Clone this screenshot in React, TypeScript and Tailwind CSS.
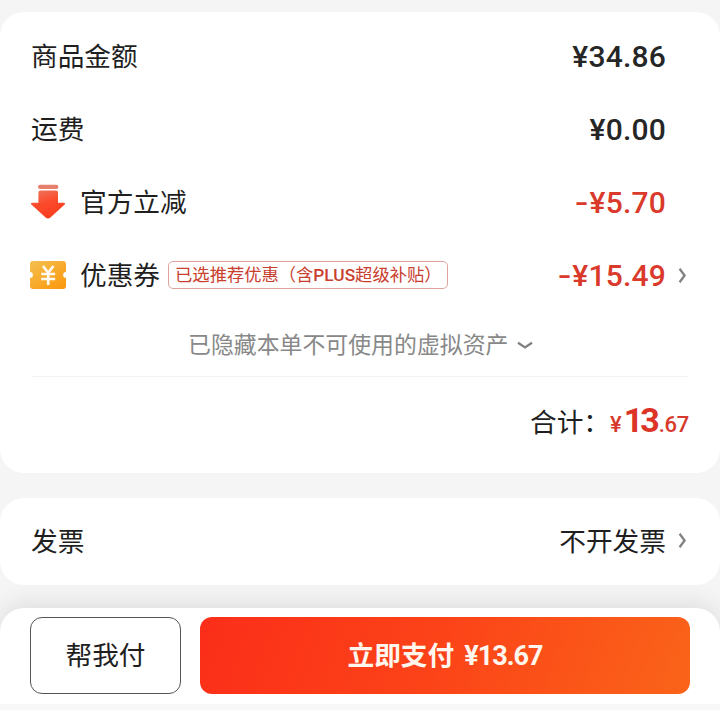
import type { ReactNode } from 'react';

const CJK = "font-['Noto_Sans_CJK_SC',sans-serif]";
const NUM = "font-['Roboto','Noto_Sans_CJK_SC',sans-serif]";

function DownArrowIcon() {
  return (
    <svg width="36" height="36" viewBox="0 0 36 36" className="-ml-px mt-px shrink-0">
      <defs>
        <linearGradient id="arrow" x1="0.2" y1="0" x2="0.6" y2="1">
          <stop offset="0" stopColor="#f0735c" />
          <stop offset="0.45" stopColor="#fb4a2c" />
          <stop offset="1" stopColor="#fb3c1c" />
        </linearGradient>
      </defs>
      <rect x="8" y="0.8" width="20.4" height="4.2" rx="2.1" fill="#e5806c" />
      <path
        d="M10.4 6.6H26Q28 6.6 28 8.6V18.8H33.6Q36 19 34.4 20.7L20.4 33.6Q18 35.6 15.6 33.6L1.6 20.7Q0 19 2.4 18.8H8.4V8.6Q8.4 6.6 10.4 6.6Z"
        fill="url(#arrow)"
      />
    </svg>
  );
}

function CouponIcon() {
  return (
    <svg width="36" height="28" viewBox="0 0 36 28" className="-ml-px shrink-0">
      <defs>
        <linearGradient id="coupon" x1="0" y1="0" x2="0.8" y2="1">
          <stop offset="0" stopColor="#f3c050" />
          <stop offset="1" stopColor="#fb9a10" />
        </linearGradient>
      </defs>
      <path
        d="M3 0H33Q36 0 36 3V11A2.9 2.9 0 0 0 36 16.8V25Q36 28 33 28H3Q0 28 0 25V16.8A2.9 2.9 0 0 0 0 11V3Q0 0 3 0Z"
        fill="url(#coupon)"
      />
      <path
        d="M13 5L18.2 11.8L23.4 5M11.2 13H25.2M11.2 18H25.2M18.2 11.5V24"
        fill="none"
        stroke="#fffaf0"
        strokeWidth="2.7"
      />
    </svg>
  );
}

function ChevronRight() {
  return (
    <svg width="10" height="17" viewBox="0 0 10 17" className="mt-px shrink-0">
      <path d="M1.6 1.8L6.6 8.5L1.6 15.2" fill="none" stroke="#808080" strokeWidth="2.3" />
    </svg>
  );
}

function Row({ label, children }: { label: ReactNode; children: ReactNode }) {
  return (
    <div className="flex h-[73px] items-center justify-between pl-[31px]">
      <div className="flex items-center">{label}</div>
      <div className="flex items-center">{children}</div>
    </div>
  );
}

function Amount({ value, negative = false }: { value: string; negative?: boolean }) {
  return (
    <span
      className={`${NUM} block pt-0.5 text-[30px] font-medium leading-none tracking-[0.2px] ${negative ? 'text-[#da3a2b]' : 'text-[#262626]'}`}
    >
      {negative && <span className="mr-px inline-block origin-right scale-x-[1.3]">-</span>}
      {value}
    </span>
  );
}

export default function App() {
  return (
    <div className={`${CJK} flex h-[710px] w-[720px] flex-col overflow-hidden bg-[#f5f5f5] pt-3 text-[26.7px] leading-none text-[#1f1f1f]`}>
      <section className="h-[461px] rounded-[24px] bg-white pt-[7px]">
        <Row label="商品金额">
          <div className="pr-[54px]"><Amount value="¥34.86" /></div>
        </Row>
        <Row label="运费">
          <div className="pr-[54px]"><Amount value="¥0.00" /></div>
        </Row>
        <Row label={<><DownArrowIcon /><span className="ml-3.5">官方立减</span></>}>
          <div className="pr-[54px]"><Amount value="¥5.70" negative /></div>
        </Row>
        <Row
          label={
            <>
              <CouponIcon />
              <span className="ml-3.5">优惠券</span>
              <span className="ml-2 flex h-7 w-[280px] items-center whitespace-nowrap rounded-[5px] border-[1.5px] border-[#dfa29c] pl-1.5 text-[17.3px] text-[#c9402f]">
                <span>已选推荐优惠（含<span className="font-['Roboto'] font-medium">PLUS</span>超级补贴）</span>
              </span>
            </>
          }
        >
          <Amount value="¥15.49" negative />
          <div className="ml-3 mr-8"><ChevronRight /></div>
        </Row>
        <div className="ml-[188px] flex h-[65px] items-center pb-px text-[22.9px] text-[#888888]">
          <span>已隐藏本单不可使用的虚拟资产</span>
          <svg width="16" height="9" viewBox="0 0 16 9" className="ml-[9px] mt-1">
            <path d="M1 1.8L8 6.4L15 1.8" fill="none" stroke="#808080" strokeWidth="2.4" />
          </svg>
        </div>
        <div className="mx-8 h-px bg-[#f2f2f2]" />
        <div className="flex items-baseline justify-end pr-[31px] pt-[26px]">
          <span>合计：</span>
          <span className={`${NUM} mr-0.5 text-[22px] font-medium text-[#d73a2c]`}>¥</span>
          <span className={`${NUM} text-[34px] font-bold tracking-[-3px] text-[#dc3427]`}>13</span>
          <span className={`${NUM} ml-0.5 text-[22px] font-medium tracking-[-0.3px] text-[#d73a2c]`}>.67</span>
        </div>
      </section>

      <section className="mt-[25px] h-[87px] rounded-[24px] bg-white pt-1.5">
        <Row label="发票">
          <span>不开发票</span>
          <div className="ml-3 mr-8"><ChevronRight /></div>
        </Row>
      </section>

      <footer className="mt-[23px] flex h-24 gap-[19px] rounded-t-[24px] bg-white px-[30px] pt-[9px] shadow-[0_-4px_24px_rgba(0,0,0,0.1)]">
        <button className="h-[77px] w-[151px] rounded-xl border-[1.5px] border-[#555555] pb-0.5">帮我付</button>
        <button className="flex h-[77px] w-[490px] items-center justify-center rounded-xl bg-[linear-gradient(110deg,#fb2e19_0%,#fc4318_48%,#fa6419_100%)] font-bold text-[#fff6ee]">
          <span className="pb-0.5">立即支付</span>
          <span className={`${NUM} ml-2.5 pt-0.5 text-[27px] font-bold tracking-[-1px]`}>¥13.67</span>
        </button>
      </footer>
      <div className="h-1.5 shrink-0 bg-[#f7f7f7]" />
    </div>
  );
}
